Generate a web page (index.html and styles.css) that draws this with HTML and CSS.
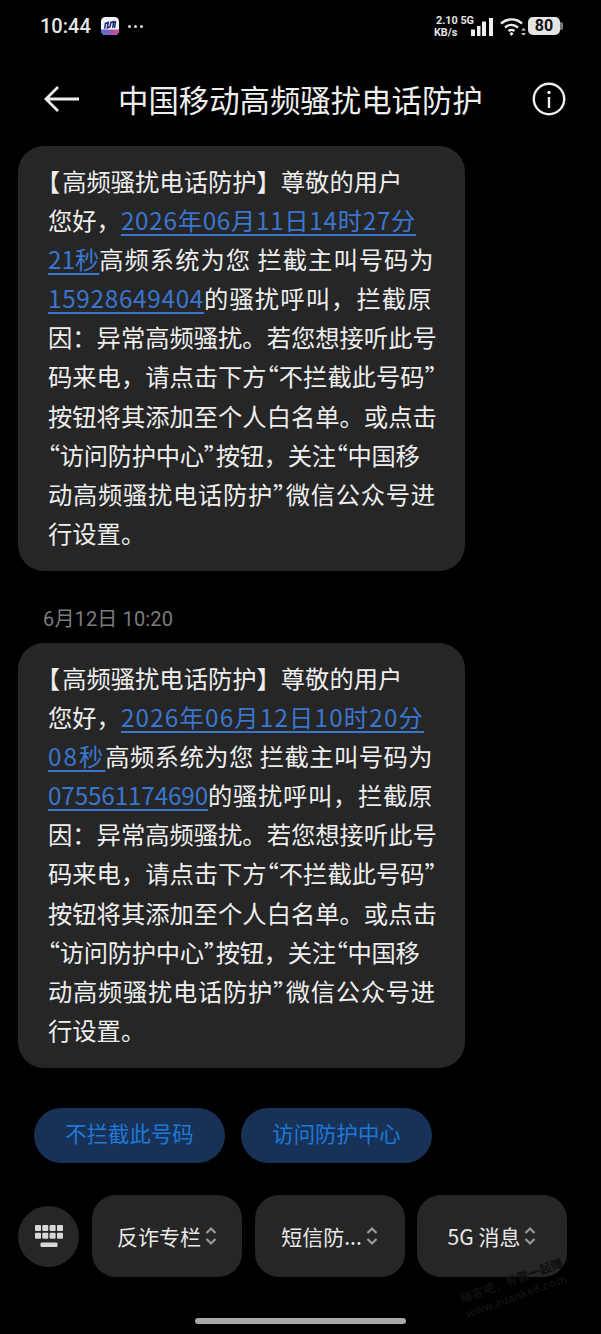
FILE: index.html
```html
<!DOCTYPE html>
<html lang="zh">
<head>
<meta charset="utf-8">
<title>中国移动高频骚扰电话防护</title>
<link rel="stylesheet" href="styles.css">
</head>
<body>
<div class="screen">
  <div class="status">
    <div class="status-left">
      <span class="clock">10:44</span>
      <svg class="app-icon" width="18" height="18" viewBox="0 0 20 20"><defs><linearGradient id="g" x1="0" y1="0" x2="1" y2="0"><stop offset="0" stop-color="#4a6fe0"/><stop offset="1" stop-color="#d8489a"/></linearGradient></defs><rect width="20" height="20" rx="5" fill="#f2f2fa"/><path d="M0 14h20v1a5 5 0 0 1-5 5H5a5 5 0 0 1-5-5z" fill="url(#g)"/><path d="M4 13l1-6 3-1-1 6 3-1 1-5 3-1-1 7M14 6l2-.5-1 6.500" fill="none" stroke="#1c2a78" stroke-width="1.700"/></svg>
      <span class="dots"><i></i><i></i><i></i></span>
    </div>
    <div class="status-right">
      <div class="speed"><span class="speed-top">2.10 5G</span><span>KB/s</span></div>
      <svg class="bars" width="22" height="18" viewBox="0 0 22 18"><path d="M0 11.500h4V18H0zM6 8h3.500v10H6zM11 3.500h4V18h-4zM18 0h4v18h-4z" fill="#eee"/></svg>
      <svg class="wifi" width="26" height="20" viewBox="0 0 26 20"><path d="M1 6.500C7 1 16 1 22 6.500M5 10.500c4-3.500 9-3.500 13 0M8.500 14c2-1.500 4-1.500 6 0" fill="none" stroke="#eee" stroke-width="2.400"/><path d="M9.500 16.500l2-1.500 2 1.500-2 2.500z" fill="#eee"/><path d="M21 13.500l2.500-2.500 2.500 2.500zM21 16l2.500 2.500 2.500-2.500z" fill="#ccc"/></svg>
      <div class="battery"><span class="batt-body">80</span><span class="batt-tip"></span></div>
    </div>
  </div>

  <header class="title-bar">
    <svg class="back" width="37" height="28" viewBox="0 0 37 28"><path d="M36 14H3M15 2L3 14l12 12" fill="none" stroke="#eee" stroke-width="2.800"/></svg>
    <h1 class="title">中国移动高频骚扰电话防护</h1>
    <svg class="info" width="34" height="34" viewBox="0 0 34 34"><circle cx="17" cy="17" r="15.200" fill="none" stroke="#eee" stroke-width="2.400"/><circle cx="17" cy="10.500" r="1.700" fill="#eee"/><path d="M17 15v11" stroke="#eee" stroke-width="2.400"/></svg>
  </header>

  <main class="messages">
    <div class="bubble">
      <p><span class="lb">【</span>高频骚扰电话防护】尊敬的用户</p>
      <p>您好，<a class="ls-a">2026年06月11日14时27分</a></p>
      <p><a>21秒</a><span class="ls-c">高频系统为您 拦截主叫号码为</span></p>
      <p><a class="ls-d">15928649404</a><span class="ls-e">的骚扰呼叫，拦截原</span></p>
      <p>因：异常高频骚扰。若您想接听此号</p>
      <p>码来电，请点击下方<span class="q">“</span>不拦截此号码<span class="q">”</span></p>
      <p>按钮将其添加至个人白名单。或点击</p>
      <p class="ls-l"><span class="q">“</span>访问防护中心<span class="q">”</span>按钮，关注<span class="q">“</span>中国移</p>
      <p class="ls-f">动高频骚扰电话防护<span class="q">”</span>微信公众号进</p>
      <p>行设置。</p>
    </div>
    <div class="stamp">6月12日 10:20</div>
    <div class="bubble">
      <p><span class="lb">【</span>高频骚扰电话防护】尊敬的用户</p>
      <p>您好，<a class="ls-g">2026年06月12日10时20分</a></p>
      <p><a class="ls-h">08秒</a><span class="ls-i">高频系统为您 拦截主叫号码为</span></p>
      <p><a class="ls-j">075561174690</a><span class="ls-k">的骚扰呼叫，拦截原</span></p>
      <p>因：异常高频骚扰。若您想接听此号</p>
      <p>码来电，请点击下方<span class="q">“</span>不拦截此号码<span class="q">”</span></p>
      <p>按钮将其添加至个人白名单。或点击</p>
      <p class="ls-l"><span class="q">“</span>访问防护中心<span class="q">”</span>按钮，关注<span class="q">“</span>中国移</p>
      <p class="ls-f">动高频骚扰电话防护<span class="q">”</span>微信公众号进</p>
      <p>行设置。</p>
    </div>
  </main>

  <div class="actions">
    <button class="action">不拦截此号码</button>
    <button class="action">访问防护中心</button>
  </div>

  <nav class="menu">
    <div class="kbd">
      <svg width="28" height="22" viewBox="0 0 28 22" fill="#d8d8d8"><rect x="0" y="0" width="6" height="6" rx="1"/><rect x="7.300" y="0" width="6" height="6" rx="1"/><rect x="14.600" y="0" width="6" height="6" rx="1"/><rect x="22" y="0" width="6" height="6" rx="1"/><rect x="0" y="7.700" width="6" height="6" rx="1"/><rect x="7.300" y="7.700" width="6" height="6" rx="1"/><rect x="14.600" y="7.700" width="6" height="6" rx="1"/><rect x="22" y="7.700" width="6" height="6" rx="1"/><rect x="5.500" y="17.500" width="17" height="4.500" rx="1"/></svg>
    </div>
    <div class="chip"><span>反诈专栏</span><svg class="updown" width="12" height="20" viewBox="0 0 12 20"><path d="M1.500 7L6 2.500 10.500 7M1.500 13L6 17.500 10.500 13" fill="none" stroke="#999" stroke-width="2.200"/></svg></div>
    <div class="chip"><span>短信防...</span><svg class="updown" width="12" height="20" viewBox="0 0 12 20"><path d="M1.500 7L6 2.500 10.500 7M1.500 13L6 17.500 10.500 13" fill="none" stroke="#999" stroke-width="2.200"/></svg></div>
    <div class="chip"><span>5G 消息</span><svg class="updown" width="12" height="20" viewBox="0 0 12 20"><path d="M1.500 7L6 2.500 10.500 7M1.500 13L6 17.500 10.500 13" fill="none" stroke="#999" stroke-width="2.200"/></svg></div>
  </nav>

  <div class="home-bar"></div>
  <div class="watermark"><span>赚客吧，有需一起赚</span><span>www.zuanke8.com</span></div>
</div>
</body>
</html>
```
FILE: styles.css
```css
* { box-sizing: border-box; }
html, body { margin: 0; padding: 0; background: #000; }
body { font-family: "Noto Sans CJK SC", "Roboto", sans-serif; color: #eee; }
.screen { position: relative; width: 601px; height: 1334px; overflow: hidden; background: #000; }

.status { height: 52px; padding: 0 38px 0 40px; display: flex; justify-content: space-between; align-items: center; }
.status-left { display: flex; align-items: center; gap: 10px; }
.clock { font: 500 20px "Roboto", sans-serif; color: #e6e6e6; }
.app-icon { display: block; }
.dots { display: flex; gap: 3px; margin-left: -1px; }
.dots i { display: block; width: 3px; height: 3px; border-radius: 50%; background: #ddd; }
.status-right { display: flex; align-items: center; }
.speed { display: flex; flex-direction: column; align-items: flex-start; font: 700 10.800px/12px "Roboto", sans-serif; color: #e6e6e6; width: 37px; margin-top: 1px; }
.speed-top { margin-left: 2px; white-space: nowrap; }
.bars { display: block; margin-top: 1px; }
.wifi { display: block; margin-left: 7px; margin-top: 2px; }
.battery { display: flex; align-items: center; margin-left: 2px; }
.batt-body { width: 32px; height: 18px; background: #e4e4e4; border-radius: 5px; color: #111; font: 700 16px/18px "Roboto", sans-serif; text-align: center; }
.batt-tip { width: 3px; height: 8px; background: #777; border-radius: 0 2px 2px 0; }

.title-bar { height: 94px; padding: 0 35px 0 43px; display: flex; align-items: center; }
.back { display: block; flex: none; }
.title { margin: 0 0 0 38px; flex: 1; font-size: 30.400px; line-height: 40px; font-weight: 400; color: #eee; white-space: nowrap; }
.info { display: block; flex: none; }

.messages { padding: 0 0 0 18px; }
.bubble { width: 447px; height: 425px; background: #262626; border-radius: 26px; padding: 15px 0 0 30px; }
.bubble p { margin: 0; height: 39.100px; font-size: 24.300px; line-height: 39.100px; white-space: nowrap; color: #eee; }
.bubble a { color: #3a76cf; text-decoration: underline; text-underline-offset: 4px; text-decoration-thickness: 1.500px; }
.lb { font-feature-settings: "halt"; letter-spacing: 2px; }
.q { font-feature-settings: "halt"; }
.ls-a { letter-spacing: .7px; }
.ls-c { letter-spacing: 1px; }
.ls-d { letter-spacing: .7px; }
.ls-e { letter-spacing: 1.100px; }
.ls-f { letter-spacing: .7px; }
.ls-g { letter-spacing: 1.170px; }
.ls-h { letter-spacing: 2px; }
.ls-i { letter-spacing: .45px; }
.ls-j { letter-spacing: -.15px; }
.ls-k { letter-spacing: .7px; }
.ls-l { letter-spacing: -.3px; }
.stamp { height: 72px; padding: 0 0 0 25px; font: 400 20px/96px "Roboto", "Noto Sans CJK SC", sans-serif; letter-spacing: .15px; color: #7c7c7c; }

.actions { display: flex; gap: 16px; padding: 40px 0 0 34px; }
.action { height: 55px; width: 191px; border: 0; border-radius: 28px; background: #173256; color: #1f78d8; font: 400 21.400px "Noto Sans CJK SC", sans-serif; padding: 0 0 6px; }

.menu { display: flex; align-items: center; padding: 32px 0 0 18px; }
.kbd { width: 61px; height: 61px; border-radius: 50%; background: #262626; display: flex; align-items: center; justify-content: center; margin-right: 13px; }
.chip { width: 150px; height: 82px; border-radius: 24px; background: #262626; display: flex; align-items: center; justify-content: center; gap: 4px; font-size: 21px; color: #e8e8e8; margin-right: 12.500px; }
.updown { display: block; flex: none; }

.home-bar { position: absolute; left: 195px; top: 1318px; width: 211px; height: 6px; border-radius: 3px; background: #a8a8a8; }
.watermark { position: absolute; left: 458px; top: 1292px; display: flex; flex-direction: column; font: 700 12px/16px "Liberation Sans", "Noto Sans CJK SC", sans-serif; color: #0f0f0f; transform: rotate(-20deg); transform-origin: left top; white-space: nowrap; }
```
